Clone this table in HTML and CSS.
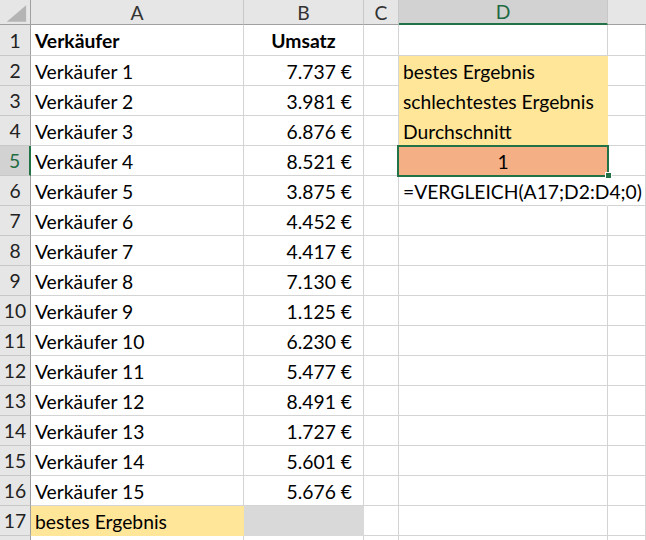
FILE: index.html
```html
<!DOCTYPE html>
<html lang="de">
<head>
<meta charset="utf-8">
<title>Tabelle</title>
<link rel="stylesheet" href="styles.css">
</head>
<body>
<div class="sheet">
  <div class="hd corner"><svg class="tri" width="31" height="25" viewBox="0 0 31 25"><polygon points="7,22 27,22 27,5" fill="#b4b4b4"/></svg></div>
  <div class="hd col">A</div><div class="hd col">B</div><div class="hd col">C</div><div class="hd col active">D</div><div class="hd col last"></div>

  <div class="rh">1</div><div class="c b">Verkäufer</div><div class="c b ctr">Umsatz</div><div class="c"></div><div class="c"></div><div class="c"></div>
  <div class="rh">2</div><div class="c">Verkäufer 1</div><div class="c num">7.737 €</div><div class="c"></div><div class="c yel">bestes Ergebnis</div><div class="c"></div>
  <div class="rh">3</div><div class="c">Verkäufer 2</div><div class="c num">3.981 €</div><div class="c"></div><div class="c yel">schlechtestes Ergebnis</div><div class="c"></div>
  <div class="rh">4</div><div class="c">Verkäufer 3</div><div class="c num">6.876 €</div><div class="c"></div><div class="c yel">Durchschnitt</div><div class="c"></div>
  <div class="rh rh-active">5</div><div class="c">Verkäufer 4</div><div class="c num">8.521 €</div><div class="c"></div><div class="c org ctr sel-cell">1<span class="sel"></span><span class="handle"></span></div><div class="c"></div>
  <div class="rh">6</div><div class="c">Verkäufer 5</div><div class="c num">3.875 €</div><div class="c"></div><div class="c over">=VERGLEICH(A17;D2:D4;0)</div><div class="c"></div>
  <div class="rh">7</div><div class="c">Verkäufer 6</div><div class="c num">4.452 €</div><div class="c"></div><div class="c"></div><div class="c"></div>
  <div class="rh">8</div><div class="c">Verkäufer 7</div><div class="c num">4.417 €</div><div class="c"></div><div class="c"></div><div class="c"></div>
  <div class="rh">9</div><div class="c">Verkäufer 8</div><div class="c num">7.130 €</div><div class="c"></div><div class="c"></div><div class="c"></div>
  <div class="rh">10</div><div class="c">Verkäufer 9</div><div class="c num">1.125 €</div><div class="c"></div><div class="c"></div><div class="c"></div>
  <div class="rh">11</div><div class="c">Verkäufer 10</div><div class="c num">6.230 €</div><div class="c"></div><div class="c"></div><div class="c"></div>
  <div class="rh">12</div><div class="c">Verkäufer 11</div><div class="c num">5.477 €</div><div class="c"></div><div class="c"></div><div class="c"></div>
  <div class="rh">13</div><div class="c">Verkäufer 12</div><div class="c num">8.491 €</div><div class="c"></div><div class="c"></div><div class="c"></div>
  <div class="rh">14</div><div class="c">Verkäufer 13</div><div class="c num">1.727 €</div><div class="c"></div><div class="c"></div><div class="c"></div>
  <div class="rh">15</div><div class="c">Verkäufer 14</div><div class="c num">5.601 €</div><div class="c"></div><div class="c"></div><div class="c"></div>
  <div class="rh">16</div><div class="c">Verkäufer 15</div><div class="c num">5.676 €</div><div class="c"></div><div class="c"></div><div class="c"></div>
  <div class="rh">17</div><div class="c yel">bestes Ergebnis</div><div class="c gry"></div><div class="c"></div><div class="c"></div><div class="c"></div>
  <div class="rh"></div><div class="c"></div><div class="c"></div><div class="c"></div><div class="c"></div><div class="c"></div>
</div>
</body>
</html>
```

FILE: styles.css
```css
html, body {
  margin: 0;
  padding: 0;
  background: #fff;
  overflow: hidden;
}
.sheet {
  display: grid;
  grid-template-columns: 31px 213px 120px 35px 209px 1fr;
  grid-template-rows: 25px 31px repeat(17, 30px);
  font-family: Lato, "Liberation Sans", sans-serif;
  font-size: 19.3px;
  color: #000;
  width: 646px;
  height: 540px;
  overflow: hidden;
}
.sheet > div {
  box-sizing: border-box;
  display: flex;
  align-items: center;
  white-space: nowrap;
  border-right: 1px solid #d4d4d4;
  border-bottom: 1px solid #d4d4d4;
}
.hd {
  background: #e6e6e6;
  justify-content: center;
  color: #333;
  border-right-color: #c8c8c8 !important;
  border-bottom-color: #a0a0a0 !important;
}
.corner {
  position: relative;
  border-right-color: #a0a0a0 !important;
}
.tri {
  display: block;
}
.hd.active {
  background: #d2d2d2;
  color: #1f6b42;
  border-bottom: 2px solid #217346 !important;
}
.hd.last {
  border-right: none;
}
.rh {
  background: #e6e6e6;
  justify-content: center;
  color: #222;
  border-right-color: #a0a0a0 !important;
  border-bottom-color: #c8c8c8 !important;
}
.rh-active {
  background: #d2d2d2;
  color: #1f6b42;
  border-right: 2px solid #217346 !important;
}
.c {
  padding: 1px 4px 0 4px;
}
.b {
  font-weight: bold;
}
.ctr {
  justify-content: center;
}
.num {
  justify-content: flex-end;
  padding-right: 11px;
}
.yel {
  background: #ffe699;
  border-color: #ffe699 !important;
}
.gry {
  background: #d9d9d9;
  border-color: #d9d9d9 !important;
}
.org {
  background: #f4b084;
}
.over {
  overflow: visible;
  border-right-color: #fff !important;
}
.sel-cell {
  position: relative;
}
.sel {
  position: absolute;
  left: -2px;
  top: -1px;
  right: -2px;
  bottom: -2px;
  border: 2px solid #217346;
}
.handle {
  position: absolute;
  right: -5px;
  bottom: -4px;
  width: 5px;
  height: 5px;
  background: #217346;
  border: 1px solid #fff;
}
```
